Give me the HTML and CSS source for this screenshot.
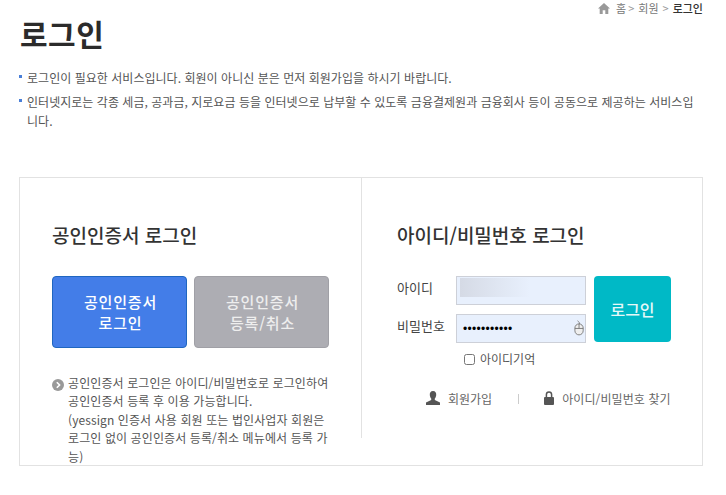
FILE: index.html
```html
<!DOCTYPE html>
<html lang="ko">

<head>
    <meta charset="UTF-8">
    <title>로그인</title>
    <link rel="stylesheet" href="styles.css">
</head>

<body>
    <div class="breadcrumb">
        <svg class="home-icon" viewBox="0 0 12 11" width="12" height="11"><path d="M6 0 L12 5.5 H10.3 V11 H7.3 V7.3 H4.7 V11 H1.7 V5.5 H0 Z" fill="#999"/></svg>
        <span class="crumb-home">홈</span> <span class="sep">&gt;</span> <span>회원</span> <span class="sep">&gt;</span> <strong>로그인</strong>
    </div>
    <h1>로그인</h1>
    <ul class="notice">
        <li>로그인이 필요한 서비스입니다. 회원이 아니신 분은 먼저 회원가입을 하시기 바랍니다.</li>
        <li>인터넷지로는 각종 세금, 공과금, 지로요금 등을 인터넷으로 납부할 수 있도록 금융결제원과 금융회사 등이 공동으로 제공하는 서비스입니다.</li>
    </ul>

    <div class="login-box">
        <section class="cert-login">
            <h2>공인인증서 로그인</h2>
            <div class="cert-buttons">
                <button class="cert-btn cert-btn-blue">공인인증서<br>로그인</button>
                <button class="cert-btn cert-btn-gray">공인인증서<br>등록/취소</button>
            </div>
            <div class="cert-note">
                <span class="note-icon"><svg viewBox="0 0 12 12" width="12" height="12"><circle cx="6" cy="6" r="6" fill="#999"/><path d="M4.8 3.2 L7.6 6 L4.8 8.8" fill="none" stroke="#fff" stroke-width="1.6"/></svg></span>
                <p>공인인증서 로그인은 아이디/비밀번호로 로그인하여 공인인증서 등록 후 이용 가능합니다.<br>(yessign 인증서 사용 회원 또는 법인사업자 회원은 로그인 없이 공인인증서 등록/취소 메뉴에서 등록 가능)</p>
            </div>
        </section>

        <section class="id-login">
            <h2>아이디/비밀번호 로그인</h2>
            <form class="login-form">
                <div class="fields">
                    <div class="field-row">
                        <label for="user-id">아이디</label>
                        <div class="input-wrap">
                            <input type="text" id="user-id">
                            <span class="id-blur"></span>
                        </div>
                    </div>
                    <div class="field-row">
                        <label for="user-pw">비밀번호</label>
                        <div class="input-wrap">
                            <input type="password" id="user-pw" value="12345678901">
                            <svg class="mouse-icon" viewBox="0 0 12 17" width="11" height="16"><path d="M6 4 C6 2 5 2 4 0.5" fill="none" stroke="#777" stroke-width="1"/><rect x="1" y="4" width="9" height="12" rx="4.5" fill="#eee" stroke="#777"/><path d="M1 9 H10 M5.5 4 V9" stroke="#777" stroke-width="1"/></svg>
                        </div>
                    </div>
                </div>
                <button type="button" class="login-btn">로그인</button>
            </form>
            <label class="remember"><input type="checkbox"><span>아이디기억</span></label>
            <div class="links">
                <a class="link-join"><svg viewBox="0 0 14 14" width="14" height="14"><path d="M7 0 C9.4 0 10.4 1.9 10.2 4 C10.1 5.6 9.5 6.8 8.8 7.6 V9 L14 11.6 V14 H0 V11.6 L5.2 9 V7.6 C4.5 6.8 3.9 5.6 3.8 4 C3.6 1.9 4.6 0 7 0 Z" fill="#555"/></svg>회원가입</a>
                <span class="divider"></span>
                <a class="link-find"><svg viewBox="0 0 10 14" width="10" height="14"><path d="M2.4 6 V3.6 C2.4 2 3.4 1 5 1 C6.6 1 7.6 2 7.6 3.6 V6" fill="none" stroke="#555" stroke-width="1.5"/><rect x="0" y="6" width="10" height="8" rx="1" fill="#555"/></svg>아이디/비밀번호 찾기</a>
            </div>
        </section>
    </div>
</body>

</html>
```

FILE: styles.css
```css
/* General Styles */
body {
    margin: 0;
    padding: 0 23px 0 19px;
    background-color: #fff;
    font-family: "Noto Sans CJK KR", "Noto Sans", sans-serif;
    font-size: 12px;
    color: #555;
    height: 495px;
    box-sizing: border-box;
    overflow: hidden;
}

.breadcrumb {
    display: flex;
    justify-content: flex-end;
    align-items: center;
    gap: 4px;
    height: 16px;
    font-size: 11px;
    color: #777;
}

.breadcrumb .home-icon {
    margin-right: 2px;
}

.breadcrumb .crumb-home {
    margin-right: -2px;
}

.breadcrumb .sep {
    color: #999;
}

.breadcrumb strong {
    color: #333;
    font-weight: 500;
}

h1 {
    margin: 0;
    height: 44px;
    padding-left: 1px;
    line-height: 34px;
    font-size: 30px;
    font-weight: 700;
    letter-spacing: 0.5px;
    color: #2b2b2b;
}

.notice {
    list-style: none;
    margin: 8px 0 0;
    padding: 0;
    width: 677px;
}

.notice li {
    position: relative;
    padding-left: 8px;
    line-height: 19px;
    margin-bottom: 5px;
    letter-spacing: 0.03px;
    word-break: break-all;
}

.notice li::before {
    content: "";
    position: absolute;
    left: 0;
    top: 7px;
    width: 3px;
    height: 3px;
    background-color: #4a7fd8;
}

/* Login box */
.login-box {
    display: flex;
    margin-top: 47px;
    width: 684px;
    height: 289px;
    box-sizing: border-box;
    border: 1px solid #e2e2e2;
    overflow: hidden;
}

.cert-login {
    width: 342px;
    box-sizing: border-box;
    padding: 0 32px;
    border-right: 1px solid #e2e2e2;
    margin-bottom: 27px;
}

.id-login {
    flex: 1;
    padding: 0 31px 0 35px;
}

h2 {
    margin: 43px 0 0;
    height: 27px;
    line-height: 27px;
    font-size: 19px;
    font-weight: 500;
    color: #333;
}

.cert-buttons {
    display: flex;
    gap: 7px;
    margin-top: 28px;
}

.cert-btn {
    width: 135px;
    height: 72px;
    padding: 0 0 0 2px;
    border-radius: 4px;
    font-family: inherit;
    font-size: 15px;
    font-weight: 500;
    letter-spacing: 0.8px;
    line-height: 21px;
    color: #fff;
    cursor: pointer;
}

.cert-btn-blue {
    background-color: #437de8;
    border: 1px solid #1f66c0;
}

.cert-btn-gray {
    background-color: #adadb3;
    border: 1px solid #a0a0a6;
    color: #eee;
}

.cert-note {
    display: flex;
    gap: 4px;
    margin-top: 26px;
    line-height: 18.4px;
    letter-spacing: 0.1px;
}

.note-icon {
    flex: none;
    padding-top: 3px;
    height: 12px;
}

.cert-note p {
    margin: 0;
    width: 262px;
    word-break: break-all;
}

/* ID login form */
.login-form {
    display: flex;
    gap: 8px;
    margin-top: 28px;
}

.fields {
    display: flex;
    flex-direction: column;
    gap: 9px;
}

.field-row {
    display: flex;
    align-items: center;
}

.field-row label {
    width: 59px;
    color: #444;
    font-size: 13px;
    margin-top: -7px;
}

.input-wrap {
    position: relative;
    width: 130px;
    height: 29px;
}

.input-wrap input {
    width: 100%;
    height: 100%;
    box-sizing: border-box;
    border: 1px solid #cdd0d8;
    background-color: #e8f0fd;
    padding: 0 6px;
    outline: none;
    font-size: 12px;
    letter-spacing: 0.3px;
}

.id-blur {
    position: absolute;
    left: 4px;
    top: 2px;
    width: 70px;
    height: 19px;
    background: linear-gradient(to right, #d5dae5, #e8f0fd);
}

.mouse-icon {
    position: absolute;
    right: 1px;
    top: 6px;
}

.login-btn {
    width: 77px;
    height: 66px;
    border: none;
    border-radius: 4px;
    background-color: #00b9c6;
    color: #e6f8f8;
    font-family: inherit;
    font-size: 16px;
    font-weight: 500;
    cursor: pointer;
}

.remember {
    display: flex;
    align-items: center;
    gap: 5px;
    margin: 5px 0 0 67px;
    height: 20px;
}

.remember input {
    margin: 3px 0 0;
    width: 11px;
    height: 11px;
}

.links {
    display: flex;
    align-items: center;
    margin: 20px 0 0 29px;
    height: 20px;
}

.links a {
    display: flex;
    align-items: center;
    gap: 8px;
    color: #666;
}

.link-find {
    gap: 9px;
    letter-spacing: 0.1px;
}

.divider {
    width: 1px;
    height: 10px;
    background-color: #ccc;
    margin: 2px 25px 0 26px;
}
```
